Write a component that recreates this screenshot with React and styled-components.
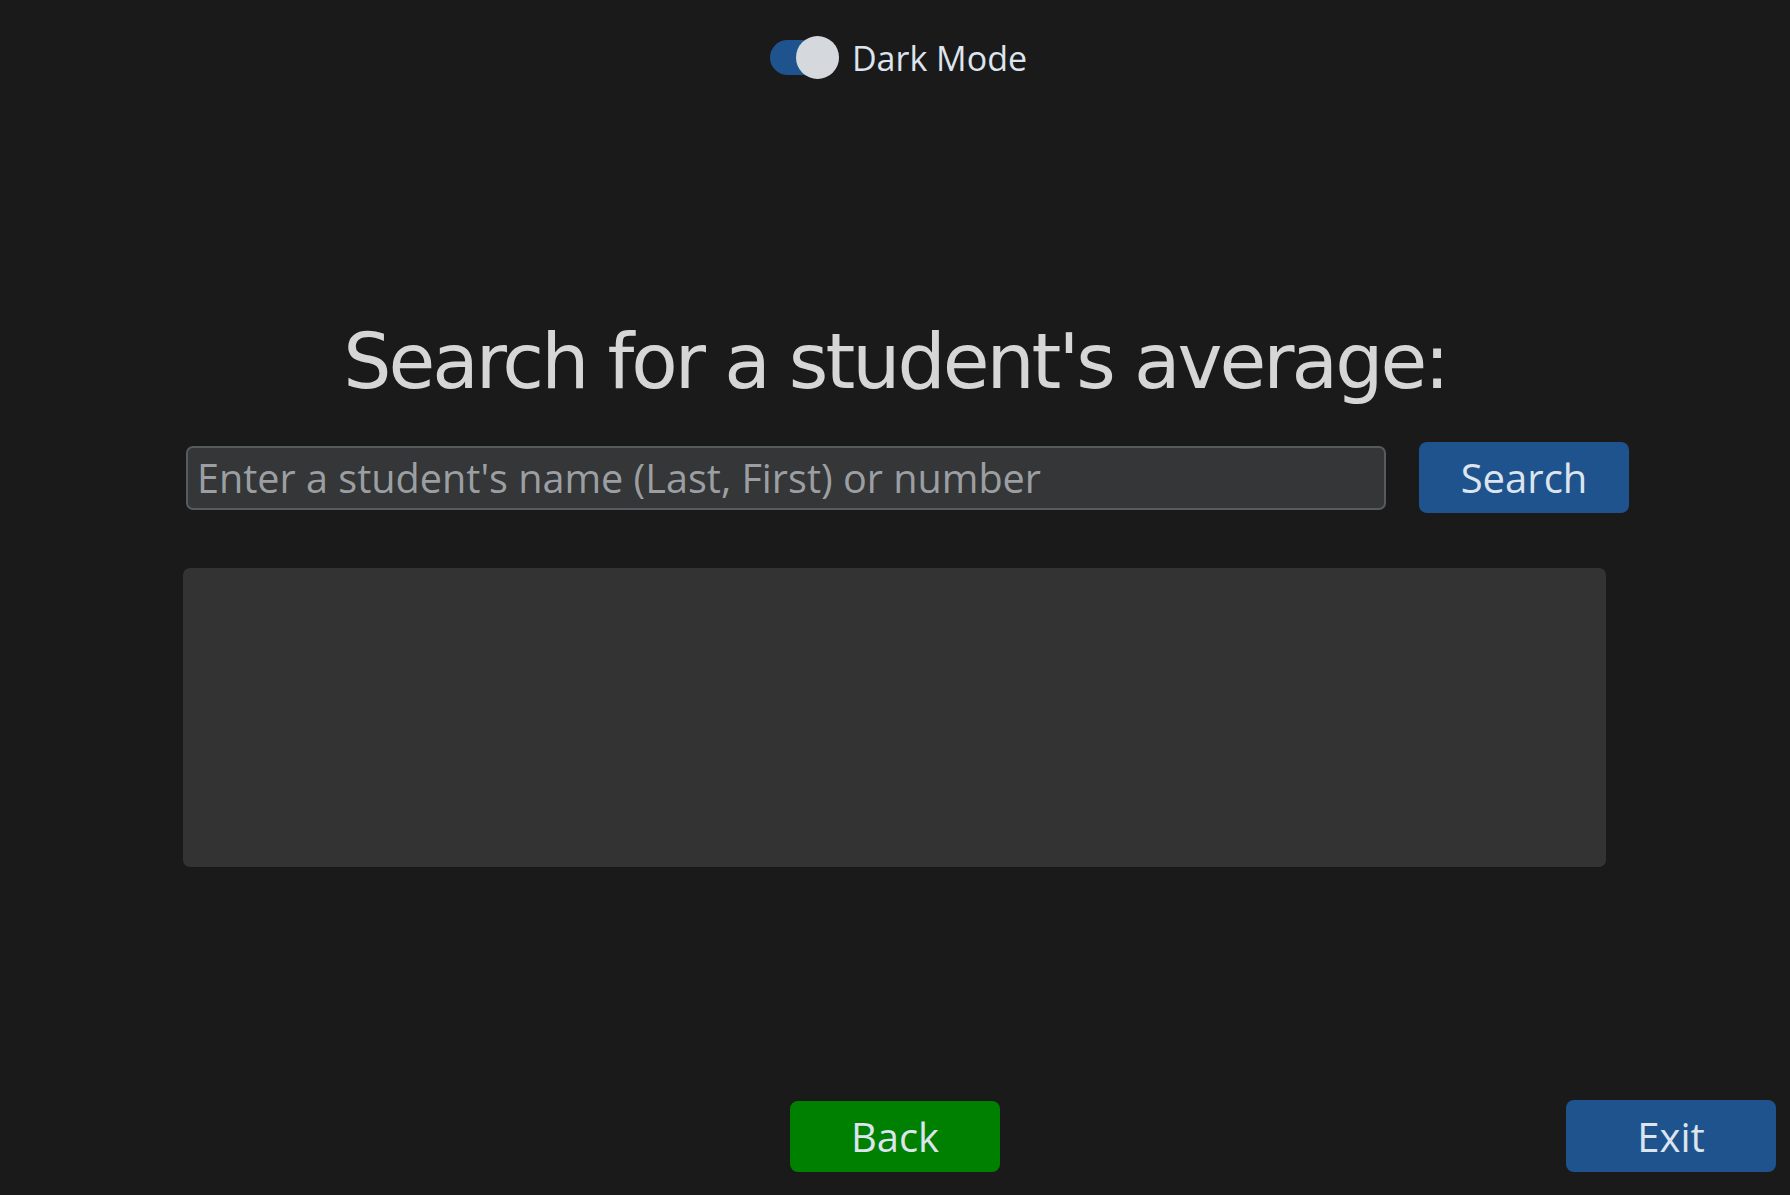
import React, { useState } from 'react';
import styled, { createGlobalStyle } from 'styled-components';

const GlobalStyle = createGlobalStyle`
   html, body {
      margin: 0;
      padding: 0;
      background: #1a1a1a;
   }
   body {
      font-family: "Open Sans", "Noto Sans", sans-serif;
   }
`;

const Page = styled.div`
   width: 1790px;
   height: 1195px;
   display: flex;
   flex-direction: column;
   background: #1a1a1a;
   overflow: hidden;
`;

const TopBar = styled.div`
   display: flex;
   justify-content: center;
   padding-top: 34px;
`;

const ToggleLabel = styled.label`
   display: flex;
   align-items: center;
   gap: 13px;
   cursor: pointer;
   margin-left: 7px;
`;

const Track = styled.div`
   position: relative;
   width: 69px;
   height: 35px;
   border-radius: 18px;
   background: ${p => (p.on ? '#1f538d' : '#4a4d50')};
`;

const Knob = styled.div`
   position: absolute;
   top: -4px;
   left: ${p => (p.on ? '26px' : '0')};
   width: 43px;
   height: 43px;
   border-radius: 50%;
   background: #d5d9de;
`;

const ToggleText = styled.span`
   font-size: 34px;
   line-height: 43px;
   padding-top: 3px;
   color: #dce4ee;
`;

const Heading = styled.h1`
   margin: 240px 0 0 0;
   text-align: center;
   font-family: "DejaVu Sans", sans-serif;
   font-weight: normal;
   font-size: 76px;
   letter-spacing: -3px;
   line-height: 84px;
   color: #d6d6d6;
`;

const SearchRow = styled.div`
   display: flex;
   align-items: center;
   gap: 33px;
   margin-top: 38px;
   padding-left: 186px;
`;

const Input = styled.input`
   box-sizing: border-box;
   width: 1200px;
   height: 64px;
   padding: 0 9px;
   border: 2px solid #565b5e;
   border-radius: 7px;
   background: #343638;
   color: #dce4ee;
   font-family: "Open Sans", "Noto Sans", sans-serif;
   font-size: 39.6px;
   outline: none;

   &::placeholder {
      color: #9c9fa2;
   }
`;

const Button = styled.button`
   box-sizing: border-box;
   width: 210px;
   height: ${p => p.h || 71}px;
   border: none;
   border-radius: 8px;
   background: ${p => p.bg || '#1f538d'};
   color: #dce4ee;
   font-family: "Open Sans", "Noto Sans", sans-serif;
   font-size: 40px;
   cursor: pointer;
`;

const ResultPanel = styled.div`
   width: 1423px;
   height: 299px;
   margin: 55px 0 0 183px;
   border-radius: 7px;
   background: #333333;
`;

const Footer = styled.div`
   margin-top: auto;
   margin-bottom: 23px;
   display: grid;
   grid-template-columns: 1fr auto 1fr;
   align-items: center;
   padding-right: 14px;
   padding-left: 14px;
`;

const RightSlot = styled.div`
   justify-self: end;
`;

const App = () => {
   const [dark, setDark] = useState(true);

   return (
      <>
         <GlobalStyle/>
         <Page>
            <TopBar>
               <ToggleLabel onClick={() => setDark(!dark)}>
                  <Track on={dark ? 1 : 0}><Knob on={dark ? 1 : 0}/></Track>
                  <ToggleText>Dark Mode</ToggleText>
               </ToggleLabel>
            </TopBar>
            <Heading>Search for a student's average:</Heading>
            <SearchRow>
               <Input placeholder="Enter a student's name (Last, First) or number"/>
               <Button>Search</Button>
            </SearchRow>
            <ResultPanel/>
            <Footer>
               <div/>
               <Button bg="#008000">Back</Button>
               <RightSlot><Button h={72}>Exit</Button></RightSlot>
            </Footer>
         </Page>
      </>
   );
};

export default App;
